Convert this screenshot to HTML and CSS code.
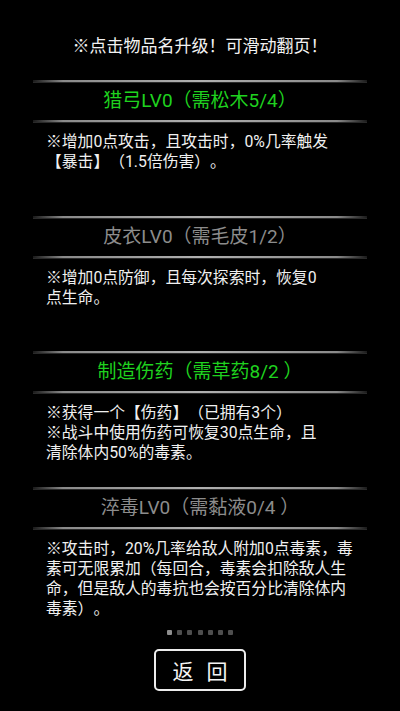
FILE: index.html
```
<!DOCTYPE html>
<html lang="zh">
<head>
<meta charset="utf-8">
<link rel="stylesheet" href="styles.css">
</head>
<body>
<div class="page">
  <div class="tip">※点击物品名升级！可滑动翻页！</div>
  <div class="list">
    <section class="item">
      <div class="rule"></div>
      <div class="title green">猎弓LV0（需松木5/4）</div>
      <div class="rule"></div>
      <div class="desc"><div>※增加0点攻击，且攻击时，0%几率触发</div><div>【暴击】（1.5倍伤害）。</div></div>
    </section>
    <section class="item">
      <div class="rule"></div>
      <div class="title gray">皮衣LV0（需毛皮1/2）</div>
      <div class="rule"></div>
      <div class="desc"><div>※增加0点防御，且每次探索时，恢复0</div><div>点生命。</div></div>
    </section>
    <section class="item">
      <div class="rule"></div>
      <div class="title green">制造伤药（需草药8/2 ）</div>
      <div class="rule"></div>
      <div class="desc"><div>※获得一个【伤药】（已拥有3个）</div><div>※战斗中使用伤药可恢复30点生命，且</div><div>清除体内50%的毒素。</div></div>
    </section>
    <section class="item">
      <div class="rule"></div>
      <div class="title gray">淬毒LV0（需黏液0/4 ）</div>
      <div class="rule"></div>
      <div class="desc"><div>※攻击时，20%几率给敌人附加0点毒素，毒</div><div>素可无限累加（每回合，毒素会扣除敌人生</div><div>命，但是敌人的毒抗也会按百分比清除体内</div><div>毒素）。</div></div>
    </section>
  </div>
  <div class="dots">
    <span class="dot on"></span><span class="dot"></span><span class="dot"></span><span class="dot"></span><span class="dot"></span><span class="dot"></span><span class="dot"></span>
  </div>
  <div class="btn-row">
    <div class="btn"><span>返</span><span>回</span></div>
  </div>
</div>
</body>
</html>
```
FILE: styles.css
```
html, body {
  margin: 0;
  padding: 0;
  background: #000;
}
body {
  font-family: "Noto Sans CJK SC", "Noto Sans", sans-serif;
  color: #f0f0f0;
  text-spacing-trim: space-all;
}
.page {
  width: 400px;
  height: 711px;
  overflow: hidden;
  display: flex;
  flex-direction: column;
}
.tip {
  margin-top: 35px;
  height: 20px;
  line-height: 20px;
  font-size: 17px;
  text-align: center;
  color: #f2f2f2;
}
.list {
  margin-top: 25px;
  display: flex;
  flex-direction: column;
}
.item {
  height: 135.5px;
  display: flex;
  flex-direction: column;
}
.rule {
  height: 2px;
  margin: 0 33px;
  background: linear-gradient(to right, #1a1a1a 0%, #8a8a8a 9%, #b0b0b0 50%, #8a8a8a 91%, #1a1a1a 100%);
  box-shadow: 0 1px 0 #2a2a2a;
}
.title {
  height: 38px;
  line-height: 38px;
  text-align: center;
  font-family: "Roboto", "Noto Sans CJK SC", sans-serif;
  font-size: 19px;
}
.green { color: #1fd21f; }
.gray { color: #8c8c8c; }
.desc {
  margin-top: 10px;
  padding-left: 46px;
  font-family: "Roboto", "Noto Sans CJK SC", sans-serif;
  font-size: 15.8px;
  white-space: nowrap;
  color: #f0f0f0;
}
.desc div {
  height: 20px;
  line-height: 20px;
}
.dots {
  margin-top: 8px;
  display: flex;
  justify-content: center;
  gap: 5.2px;
  height: 5px;
}
.dot {
  width: 5px;
  height: 5px;
  border-radius: 1px;
  background: #4e4e4e;
}
.dot.on { background: #8e8e8e; }
.btn-row {
  margin-top: 14px;
  display: flex;
  justify-content: center;
}
.btn {
  box-sizing: border-box;
  width: 92px;
  height: 42px;
  border: 2px solid #ececec;
  border-radius: 5px;
  display: flex;
  justify-content: center;
  align-items: center;
  gap: 13px;
  font-size: 21px;
  color: #f4f4f4;
}
```
